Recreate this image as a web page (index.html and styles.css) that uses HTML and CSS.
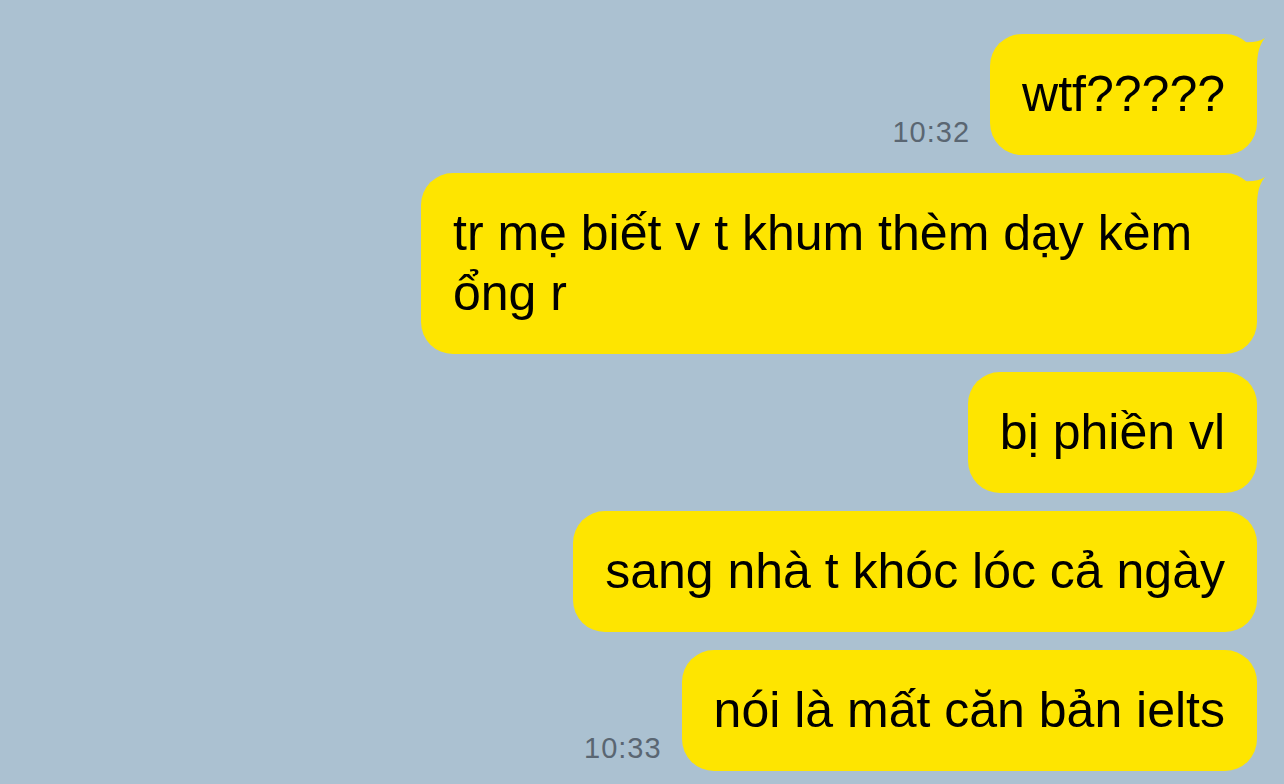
FILE: index.html
```html
<!DOCTYPE html>
<html lang="vi">

<head>
  <meta charset="UTF-8">
  <meta name="viewport" content="width=device-width, initial-scale=1.0">
  <title>Chat</title>
  <link rel="stylesheet" href="styles.css">
</head>

<body>
  <div class="chat">
    <div class="row">
      <span class="time">10:32</span>
      <div class="bubble">
        wtf?????
        <svg class="tail" width="26" height="34" viewBox="0 0 26 34">
          <path d="M0 8 C10 9 18 8 24 4 C19 10 16 18 16 34 L0 34 Z" fill="#fee500"/>
        </svg>
      </div>
    </div>
    <div class="row">
      <div class="bubble">
        tr mẹ biết v t khum thèm dạy kèm ổng r
        <svg class="tail" width="26" height="34" viewBox="0 0 26 34">
          <path d="M0 8 C10 9 18 8 24 4 C19 10 16 18 16 34 L0 34 Z" fill="#fee500"/>
        </svg>
      </div>
    </div>
    <div class="row">
      <div class="bubble">bị phiền vl</div>
    </div>
    <div class="row">
      <div class="bubble">sang nhà t khóc lóc cả ngày</div>
    </div>
    <div class="row">
      <span class="time">10:33</span>
      <div class="bubble">nói là mất căn bản ielts</div>
    </div>
  </div>
</body>

</html>
```

FILE: styles.css
```css
body {
  margin: 0;
  background-color: #abc1d1;
  font-family: 'Liberation Sans', Arial, sans-serif;
  min-height: 100vh;
}

.chat {
  display: flex;
  flex-direction: column;
  align-items: flex-end;
  gap: 18px;
  padding: 34px 27px 0 0;
}

.row {
  display: flex;
  align-items: flex-end;
  gap: 20px;
}

.time {
  font-size: 29px;
  letter-spacing: 1px;
  color: #5a6672;
  margin-bottom: 6px;
}

.bubble {
  position: relative;
  background-color: #fee500;
  color: #000;
  font-size: 50px;
  line-height: 60px;
  padding: 30px 32px 31px 32px;
  border-radius: 32px;
  max-width: 772px;
}

.tail {
  position: absolute;
  top: 0;
  right: -10px;
}
```
